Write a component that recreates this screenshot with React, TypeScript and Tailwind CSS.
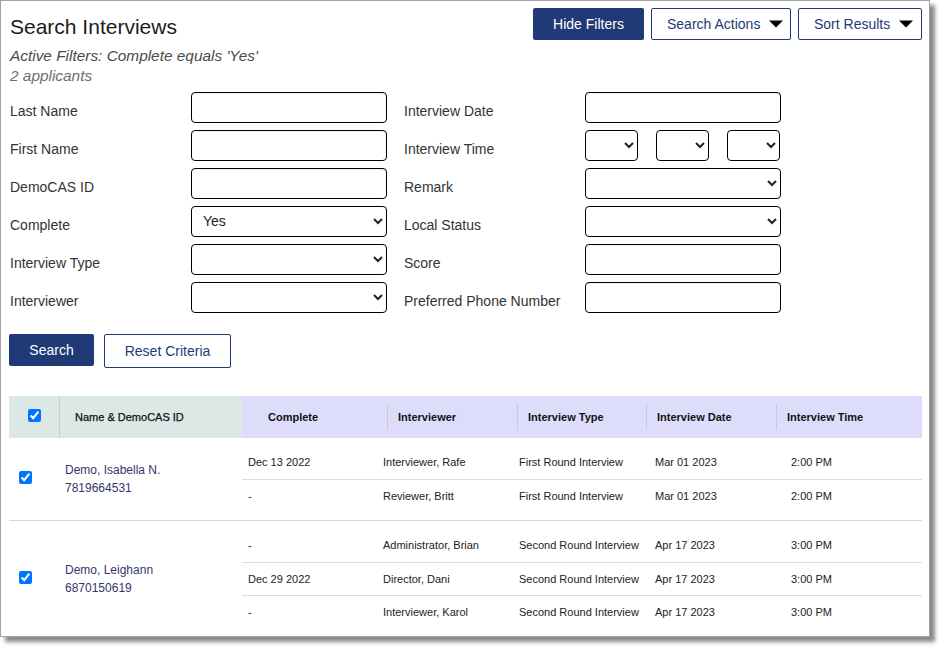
import React from "react";

const font = { fontFamily: '"Liberation Sans", Arial, sans-serif' };

const inputCls = "block w-[196px] h-[31px] border border-black rounded-[4px] bg-white text-[14px] text-[#222] shadow-[inset_0_1px_1px_#0000000f]";
const selectCls = "block h-[31px] border border-black rounded-[4px] bg-white text-[14px] text-[#222] pl-[7px] pb-[2px]";

function Label({ children }: { children: React.ReactNode }) {
  return <div className="pt-[9px] text-[14px] leading-[20px] text-[#333]">{children}</div>;
}

function RightLabel({ children }: { children: React.ReactNode }) {
  return <div className="pl-[17px] pt-[9px] text-[14px] leading-[20px] text-[#333]">{children}</div>;
}

function Caret() {
  return (
    <svg width="14" height="8" viewBox="0 0 14 8" className="block">
      <path d="M0 0.5H14L7 7.5Z" fill="#000" />
    </svg>
  );
}

function Sel({ value, cls }: { value?: string; cls: string }) {
  return (
    <select className={cls} defaultValue={value ?? ""}>
      <option value=""></option>
      <option value="Yes">Yes</option>
    </select>
  );
}

type Sub = { complete: string; who: string; type: string; date: string; time: string };

const groups: { name: string; id: string; rows: Sub[] }[] = [
  {
    name: "Demo, Isabella N.",
    id: "7819664531",
    rows: [
      { complete: "Dec 13 2022", who: "Interviewer, Rafe", type: "First Round Interview", date: "Mar 01 2023", time: "2:00 PM" },
      { complete: "-", who: "Reviewer, Britt", type: "First Round Interview", date: "Mar 01 2023", time: "2:00 PM" },
    ],
  },
  {
    name: "Demo, Leighann",
    id: "6870150619",
    rows: [
      { complete: "-", who: "Administrator, Brian", type: "Second Round Interview", date: "Apr 17 2023", time: "3:00 PM" },
      { complete: "Dec 29 2022", who: "Director, Dani", type: "Second Round Interview", date: "Apr 17 2023", time: "3:00 PM" },
      { complete: "-", who: "Interviewer, Karol", type: "Second Round Interview", date: "Apr 17 2023", time: "3:00 PM" },
    ],
  },
];

export default function App() {
  return (
    <div className="w-[945px] h-[653px] bg-white overflow-hidden" style={font}>
      <div className="w-[930px] h-[637px] bg-white border border-[#a3a3a3] pl-[8px] pr-[7px] pt-[7px] shadow-[5px_5px_4px_#8a8a8a]">
        <div className="flex justify-between items-start">
          <h1 className="text-[21px] leading-[24px] pt-[7px] pl-[1px] text-[#1c1c1c]">Search Interviews</h1>
          <div className="flex gap-[7px]">
            <button className="w-[111px] h-[32px] rounded-[2px] bg-[#1f3a77] text-white text-[14px]">Hide Filters</button>
            <button className="w-[140px] h-[32px] rounded-[2px] border border-[#1f3a77] bg-white text-[#1f3a77] text-[14px] flex items-center pl-[15px] pr-[7px] justify-between">
              <span>Search Actions</span>
              <Caret />
            </button>
            <button className="w-[124px] h-[32px] rounded-[2px] border border-[#1f3a77] bg-white text-[#1f3a77] text-[14px] flex items-center pl-[15px] pr-[8px] justify-between">
              <span>Sort Results</span>
              <Caret />
            </button>
          </div>
        </div>

        <div className="mt-[6px] pl-[1px] text-[15.4px] leading-[20px] italic">
          <div className="text-[#4a4a4a]">Active Filters: Complete equals 'Yes'</div>
          <div className="text-[#6e6e6e]">2 applicants</div>
        </div>

        <div className="mt-[6px] grid grid-cols-[182px_196px_198px_196px] gap-y-[7px]">
          <div className="pl-[1px]"><Label>Last Name</Label></div>
          <input className={inputCls} />
          <RightLabel>Interview Date</RightLabel>
          <input className={inputCls} />

          <div className="pl-[1px]"><Label>First Name</Label></div>
          <input className={inputCls} />
          <RightLabel>Interview Time</RightLabel>
          <div className="flex gap-[18px]">
            <Sel cls={selectCls + " w-[53px]"} />
            <Sel cls={selectCls + " w-[53px]"} />
            <Sel cls={selectCls + " w-[53px]"} />
          </div>

          <div className="pl-[1px]"><Label>DemoCAS ID</Label></div>
          <input className={inputCls} />
          <RightLabel>Remark</RightLabel>
          <Sel cls={selectCls + " w-[196px]"} />

          <div className="pl-[1px]"><Label>Complete</Label></div>
          <Sel cls={selectCls + " w-[196px]"} value="Yes" />
          <RightLabel>Local Status</RightLabel>
          <Sel cls={selectCls + " w-[196px]"} />

          <div className="pl-[1px]"><Label>Interview Type</Label></div>
          <Sel cls={selectCls + " w-[196px]"} />
          <RightLabel>Score</RightLabel>
          <input className={inputCls} />

          <div className="pl-[1px]"><Label>Interviewer</Label></div>
          <Sel cls={selectCls + " w-[196px]"} />
          <RightLabel>Preferred Phone Number</RightLabel>
          <input className={inputCls} />
        </div>

        <div className="mt-[21px] flex items-start gap-[10px]">
          <button className="w-[85px] h-[32px] rounded-[2px] bg-[#1f3a77] text-white text-[14px]">Search</button>
          <button className="w-[127px] h-[34px] rounded-[2px] border border-[#1f3a77] bg-white text-[#1f3a77] text-[14px]">Reset Criteria</button>
        </div>

        <div className="mt-[28px] w-[913px]">
          <div className="flex h-[42px] text-[11px] font-bold text-[#111]">
            <div className="w-[233px] bg-[#dbe8e6] flex items-center">
              <div className="w-[51px] h-full border-r border-[#c3cfcd] flex justify-center pt-[13px]">
                <input type="checkbox" defaultChecked className="block w-[13px] h-[13px] m-0" />
              </div>
              <div className="pl-[15px] pt-[1px] font-normal [-webkit-text-stroke:0.25px_#111]">Name &amp; DemoCAS ID</div>
            </div>
            <div className="flex-1 bg-[#ddddfb] flex items-center text-[#111]">
              <div className="w-[145px] pl-[26px]">Complete</div>
              <div className="w-[130px] h-[26px] border-l border-[#c9c9d6] pl-[10px] flex items-center">Interviewer</div>
              <div className="w-[129px] h-[26px] border-l border-[#c9c9d6] pl-[10px] flex items-center">Interview Type</div>
              <div className="w-[130px] h-[26px] border-l border-[#c9c9d6] pl-[10px] flex items-center">Interview Date</div>
              <div className="flex-1 h-[26px] border-l border-[#c9c9d6] pl-[10px] flex items-center">Interview Time</div>
            </div>
          </div>

          {groups.map((g, i) => (
            <div key={g.id} className={"flex " + (i === 0 ? "border-b border-[#d8d8d8]" : "")}>
              <div className="w-[233px] flex items-center">
                <div className="w-[50px] pl-[10px] pb-[3px] flex">
                  <input type="checkbox" defaultChecked className="block w-[13px] h-[13px] m-0" />
                </div>
                <div className="pl-[6px] text-[12px] leading-[18px] text-[#35356b]">
                  <div>{g.name}</div>
                  <div>{g.id}</div>
                </div>
              </div>
              <div className="flex-1 pt-[8px] pb-[7px] text-[11px] text-[#222]">
                {g.rows.map((r, j) => (
                  <div
                    key={j}
                    className={
                      "flex items-center " +
                      (j === 0 ? "h-[34px] " : "h-[33px] ") +
                      (j < g.rows.length - 1 ? "border-b border-[#dcdcdc]" : "")
                    }
                  >
                    <div className="w-[141px] pl-[6px]">{r.complete}</div>
                    <div className="w-[136px]">{r.who}</div>
                    <div className="w-[136px]">{r.type}</div>
                    <div className="w-[136px]">{r.date}</div>
                    <div>{r.time}</div>
                  </div>
                ))}
              </div>
            </div>
          ))}
        </div>
      </div>
    </div>
  );
}
